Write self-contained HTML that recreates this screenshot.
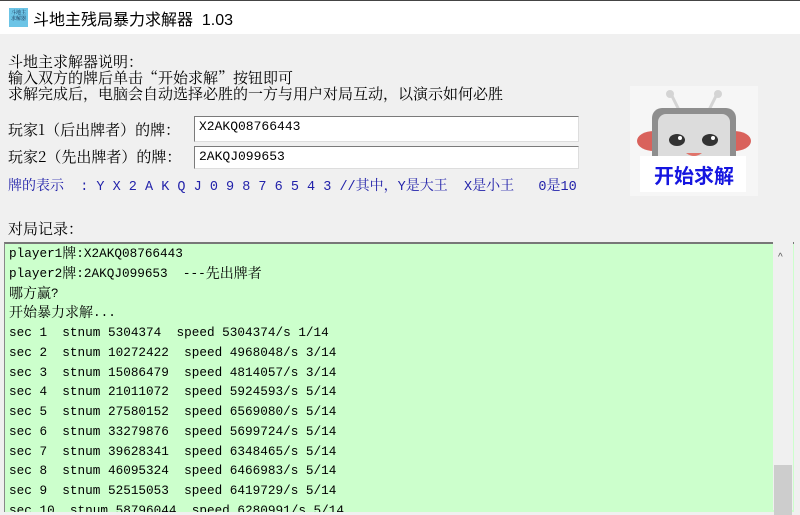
<!DOCTYPE html>
<html><head><meta charset="utf-8"><style>
*{margin:0;padding:0;box-sizing:border-box}
body{width:800px;height:510px;overflow:hidden;background:#f0f0f0;position:relative;font-family:"Liberation Serif","Noto Serif CJK SC",serif;font-size:15px;color:#000}
.a{position:absolute;white-space:pre}
.m{font-family:"Liberation Mono","Noto Serif CJK SC",monospace}
.c{font-family:"Noto Serif CJK SC",serif;font-size:15px}
#tb{position:absolute;left:0;top:0;width:800px;height:34px;background:#fff;border-top:1px solid #444}
.inp{position:absolute;left:194px;width:385px;background:#fff;border:1px solid #7a7a7a;border-right-color:#ddd;border-bottom-color:#ddd;font-size:13px;padding:1px 4px;line-height:18px}
#log{position:absolute;left:4px;top:242px;width:790px;height:270px;background:#ccffcc;border-top:2px solid #777;border-left:1px solid #888;overflow:hidden}
#log div{height:19.75px;line-height:19.75px;font-size:12.7px;padding-left:4px;white-space:pre;overflow:hidden}
#log .c{font-size:14px;line-height:19.75px;vertical-align:top}
#sb{position:absolute;left:773px;top:242px;width:20px;height:268px;background:#f0f0f0}
</style></head><body>
<div id="tb">
<div style="position:absolute;left:9px;top:7px;width:19px;height:19px;background:#6cc4e6;font-size:5px;color:#124;line-height:6px;text-align:center;padding-top:3px">斗地主<br>求解器</div>
<div class="a" style="left:33px;top:5px;font-family:'Liberation Sans','Noto Sans CJK SC',sans-serif;font-size:16px">斗地主残局暴力求解器  1.03</div>
</div>
<div class="a c" style="left:8px;top:54px;line-height:16px">斗地主求解器说明：
输入双方的牌后单击“开始求解”按钮即可
求解完成后，电脑会自动选择必胜的一方与用户对局互动，以演示如何必胜</div>
<div class="a c" style="left:8px;top:119px">玩家1（后出牌者）的牌：</div>
<div class="a c" style="left:8px;top:146px">玩家2（先出牌者）的牌：</div>
<div class="inp m" style="top:116px;height:26px">X2AKQ08766443</div>
<div class="inp m" style="top:146px;height:23px">2AKQJ099653</div>
<div class="a" style="left:8px;top:175px;color:#2222aa;font-size:14px"><span class="c" style="font-size:14px">牌的表示</span><span class="m" style="font-size:13.5px">  : Y X 2 A K Q J 0 9 8 7 6 5 4 3 //</span><span style="font-size:14px" class="c">其中，</span><span class="m" style="font-size:13.5px">Y</span><span class="c" style="font-size:14px">是大王</span><span class="m" style="font-size:13.5px">  X</span><span class="c" style="font-size:14px">是小王</span><span class="m" style="font-size:13.5px">   0</span><span class="c" style="font-size:14px">是</span><span class="m" style="font-size:13.5px">10</span></div>
<div style="position:absolute;left:630px;top:86px;width:128px;height:110px;background:#f6f6f6">
<svg width="128" height="110" viewBox="0 0 128 110">
<line x1="50" y1="26" x2="41" y2="8" stroke="#d4d4d4" stroke-width="3"/><line x1="78" y1="26" x2="87" y2="8" stroke="#d4d4d4" stroke-width="3"/>
<circle cx="40" cy="8" r="4" fill="#d4d4d4"/><circle cx="88" cy="8" r="4" fill="#d4d4d4"/>
<ellipse cx="24" cy="55" rx="17" ry="10" fill="#d9625c"/><ellipse cx="104" cy="55" rx="17" ry="10" fill="#d9625c"/>
<rect x="22" y="22" width="84" height="64" rx="10" fill="#8e8e8e"/>
<rect x="28" y="28" width="72" height="52" rx="8" fill="#dcdcdc"/>
<ellipse cx="47" cy="54" rx="8" ry="6" fill="#333"/><ellipse cx="80" cy="54" rx="8" ry="6" fill="#333"/>
<circle cx="50" cy="52" r="2" fill="#fff"/><circle cx="83" cy="52" r="2" fill="#fff"/>
<path d="M56 67 Q64 73 72 67 Z" fill="#e0736a"/>
<rect x="10" y="70" width="106" height="36" fill="#fff"/>
<text x="64" y="97" text-anchor="middle" fill="#1515e0" font-size="20" font-weight="bold" font-family="Noto Sans CJK SC,sans-serif">开始求解</text>
</svg></div>
<div class="a c" style="left:8px;top:218px">对局记录：</div>
<div id="log" class="m">
<div>player1<span class="c">牌</span>:X2AKQ08766443</div>
<div>player2<span class="c">牌</span>:2AKQJ099653  ---<span class="c">先出牌者</span></div>
<div><span class="c">哪方赢</span>?</div>
<div><span class="c">开始暴力求解</span>...</div>
<div>sec 1  stnum 5304374  speed 5304374/s 1/14</div>
<div>sec 2  stnum 10272422  speed 4968048/s 3/14</div>
<div>sec 3  stnum 15086479  speed 4814057/s 3/14</div>
<div>sec 4  stnum 21011072  speed 5924593/s 5/14</div>
<div>sec 5  stnum 27580152  speed 6569080/s 5/14</div>
<div>sec 6  stnum 33279876  speed 5699724/s 5/14</div>
<div>sec 7  stnum 39628341  speed 6348465/s 5/14</div>
<div>sec 8  stnum 46095324  speed 6466983/s 5/14</div>
<div>sec 9  stnum 52515053  speed 6419729/s 5/14</div>
<div>sec 10  stnum 58796044  speed 6280991/s 5/14</div>
</div>
<div id="sb"><div style="position:absolute;left:5px;top:10px;font-size:10px;color:#555;font-family:'Liberation Sans',sans-serif">&#94;</div><div style="position:absolute;left:1px;top:223px;width:18px;height:50px;background:#cdcdcd"></div></div>
</body></html>
